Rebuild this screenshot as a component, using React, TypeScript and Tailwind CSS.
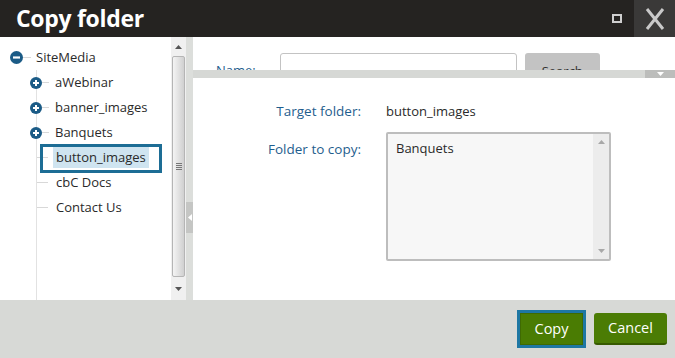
import React from "react";

const font = { fontFamily: '"Open Sans", "Noto Sans", sans-serif' };

const PlusIcon = () => (
  <svg width="12" height="12" viewBox="0 0 12 12" className="shrink-0">
    <circle cx="6" cy="6" r="6" fill="#1b5b86" />
    <path d="M3 6h6M6 3v6" stroke="#fff" strokeWidth="2" />
  </svg>
);

const MinusIcon = () => (
  <svg width="13" height="13" viewBox="0 0 13 13" className="shrink-0">
    <circle cx="6.5" cy="6.5" r="6.5" fill="#1b5b86" />
    <path d="M3 6.5h7" stroke="#fff" strokeWidth="2.2" />
  </svg>
);

const Tri = ({ dir, color }: { dir: "up" | "down" | "left"; color: string }) => {
  const d =
    dir === "up" ? "M0 4L3.5 0L7 4Z" : dir === "down" ? "M0 0L7 0L3.5 4Z" : "M4 0L4 7L0 3.5Z";
  return (
    <svg width={dir === "left" ? 4 : 7} height={dir === "left" ? 7 : 4}>
      <path d={d} fill={color} />
    </svg>
  );
};

interface Node {
  name: string;
  expandable?: boolean;
  selected?: boolean;
}

const children: Node[] = [
  { name: "aWebinar", expandable: true },
  { name: "banner_images", expandable: true },
  { name: "Banquets", expandable: true },
  { name: "button_images", selected: true },
  { name: "cbC Docs" },
  { name: "Contact Us" },
];

const Tree = () => (
  <div className="flex flex-col w-[171px] h-full bg-white pt-[8px] text-[13px] text-[#2a2a2a]">
    <div className="flex items-center h-[25px] pl-[10px]">
      <MinusIcon />
      <div className="w-[8px] h-px bg-[#d8d8d8]" />
      <span className="ml-[5px]">SiteMedia</span>
    </div>
    <div className="flex-1 ml-[36px] border-l border-[#e2e2e2]">
      {children.map((c) => (
        <div key={c.name} className="relative flex items-center h-[25px]">
          {c.expandable ? (
            <>
              <div className="-ml-[7px]">
                <PlusIcon />
              </div>
              <div className="w-[7px] h-px bg-[#d8d8d8]" />
              <span className="ml-[6px]">{c.name}</span>
            </>
          ) : (
            <>
              <div className="w-[11px] h-px bg-[#d8d8d8]" />
              {c.selected ? (
                <span className="ml-[5px] px-[3px] bg-[#cfe4f0] leading-[21px]">{c.name}</span>
              ) : (
                <span className="ml-[8px]">{c.name}</span>
              )}
            </>
          )}
          {c.selected && (
            <div className="absolute left-[3px] -top-[1px] w-[122px] h-[29px] border-[3px] border-[#1d6d95]" />
          )}
        </div>
      ))}
    </div>
  </div>
);

const TreeScroll = () => (
  <div className="flex flex-col items-center w-[15px] h-full bg-[#f0f0f0]">
    <div className="h-[19px] flex items-center">
      <Tri dir="up" color="#555" />
    </div>
    <div className="w-[13px] flex-1 rounded-[2px] border border-[#b5b5b5] bg-gradient-to-r from-[#f4f4f4] via-[#e2e2e2] to-[#d0d0d0] flex flex-col items-center justify-center gap-[1px]">
      <div className="w-[6px] h-px bg-[#777]" />
      <div className="w-[6px] h-px bg-[#777]" />
      <div className="w-[6px] h-px bg-[#777]" />
      <div className="w-[6px] h-px bg-[#777]" />
    </div>
    <div className="h-[23px] flex items-center">
      <Tri dir="down" color="#555" />
    </div>
  </div>
);

const Divider = () => (
  <div className="flex flex-col w-[7px] h-full bg-[#dcdedb]">
    <div className="h-[165px]" />
    <div className="h-[31px] bg-[#c5c6c4] flex items-center justify-center">
      <Tri dir="left" color="#fff" />
    </div>
  </div>
);

const RightPane = () => (
  <div className="flex flex-col flex-1 h-full bg-white text-[13px]">
    <div className="h-[33px] overflow-hidden flex items-start pt-[16px]">
      <span className="ml-[23px] mt-[8px] text-[#1f5e8e]">Name:</span>
      <div className="ml-[24px] w-[237px] h-[24px] border border-[#c3c3c3] rounded-[3px] bg-white" />
      <div className="ml-[8px] w-[75px] h-[24px] rounded-[3px] bg-[#c3c3c3] flex justify-center pt-[9px] text-[#333]">
        Search
      </div>
    </div>
    <div className="flex h-[8px] bg-[#d6d8d5]">
      <div className="flex-1" />
      <div className="w-[30px] bg-[#bcbdbb] flex items-center justify-center">
        <Tri dir="down" color="#fff" />
      </div>
    </div>
    <div className="flex-1 grid grid-cols-[168px_1fr] gap-x-[25px] gap-y-[11px] content-start pt-[23px]">
      <div className="text-right text-[#1f5e8e] text-[13.5px] leading-[20px]">Target folder:</div>
      <div className="text-[#2a2a2a] leading-[20px]">button_images</div>
      <div className="text-right text-[#1f5e8e] text-[13.5px] leading-[20px] pt-[7px]">Folder to copy:</div>
      <div className="flex w-[225px] h-[129px] border-2 border-[#bdbdbd] rounded-[2px] bg-[#f7f7f7]">
        <div className="flex-1 pl-[8px] pt-[4px] text-[#2a2a2a] leading-[20px]">Banquets</div>
        <div className="w-[16px] bg-[#ececec] flex flex-col items-center justify-between py-[6px]">
          <Tri dir="up" color="#a8a8a8" />
          <Tri dir="down" color="#a8a8a8" />
        </div>
      </div>
    </div>
  </div>
);

export default function App() {
  return (
    <div style={font} className="w-[675px] h-[358px] flex flex-col overflow-hidden bg-white">
      <div className="h-[37px] shrink-0 flex items-center bg-[#252321]">
        <h1 className="ml-[16px] text-[23px] font-bold text-white tracking-[-0.3px]">Copy folder</h1>
        <div className="flex-1" />
        <div className="w-[10px] h-[9px] border-2 border-[#cfcfcf] mr-[12px]" />
        <div className="w-[41px] h-full bg-[#3a3938] flex items-center justify-center">
          <svg width="20" height="24" viewBox="0 0 20 24">
            <path d="M2 2L18 22M18 2L2 22" stroke="#c9c9c9" strokeWidth="3" />
          </svg>
        </div>
      </div>
      <div className="flex flex-1 min-h-0">
        <Tree />
        <TreeScroll />
        <Divider />
        <RightPane />
      </div>
      <div className="h-[58px] shrink-0 bg-[#d7d9d6] flex items-center justify-end pr-[8px] gap-[8px]">
        <div className="border-[3px] border-[#1e77a3]">
          <button className="w-[63px] h-[32px] bg-[#4a7c03] border border-[#3f6a02] text-white text-[14.5px]">
            Copy
          </button>
        </div>
        <button className="w-[73px] h-[32px] rounded-[3px] bg-[#4b7c04] border-b-2 border-[#365a00] text-white text-[14.5px]">
          Cancel
        </button>
      </div>
    </div>
  );
}
